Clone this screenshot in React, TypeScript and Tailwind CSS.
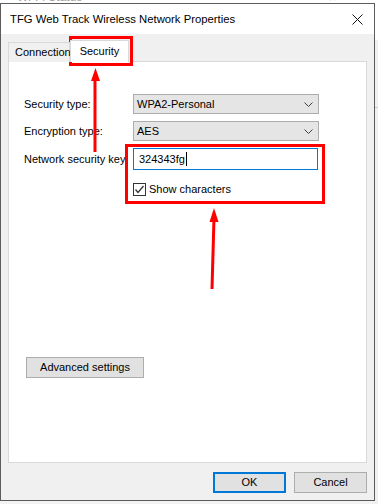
import React from "react";

const font = { fontFamily: '"Liberation Sans", Arial, sans-serif' };

function Chevron() {
  return (
    <svg width="9" height="5" viewBox="0 0 9 5" className="mr-[5px]">
      <polyline points="0.5,0.5 4.5,4.5 8.5,0.5" fill="none" stroke="#404040" strokeWidth="1" />
    </svg>
  );
}

function Combo({ value }: { value: string }) {
  return (
    <div className="flex h-[20px] w-[186px] items-center justify-between border border-[#adadad] bg-[#e5e5e5] pl-[3px] text-[11px] text-black">
      <span className="leading-none">{value}</span>
      <Chevron />
    </div>
  );
}

export default function App() {
  return (
    <div className="relative h-[504px] w-[378px] overflow-hidden bg-[#f3f3f3]" style={font}>
      {/* window behind */}
      <div className="absolute left-0 top-0 h-[40px] w-[378px] bg-white">
        <span className="absolute left-[17px] top-[-9px] text-[12px] leading-[12px] text-[#a0a0a0]">Wi-Fi Status</span>
        <span className="absolute left-[329px] top-[-8px] text-[12px] leading-[12px] text-[#a0a0a0]">×</span>
      </div>
      <div className="absolute right-0 top-[40px] h-[464px] w-[6px] bg-[#f0f0f0]">
        <div className="mt-[67px] h-px w-full bg-[#c8c8c8]" />
      </div>

      {/* dialog */}
      <div className="absolute left-0 top-[3px] flex h-[498px] w-[375px] flex-col border border-[#5c5c5c] bg-[#f0f0f0] text-black">
        <div className="flex h-[30px] items-center justify-between bg-white pl-[9px] pr-[10px]">
          <span className="text-[11.3px]">TFG Web Track Wireless Network Properties</span>
          <svg width="11" height="11" viewBox="0 0 11 11" className="mr-[1px]">
            <path d="M0.5 0.5 L10.5 10.5 M10.5 0.5 L0.5 10.5" stroke="#111" strokeWidth="1" />
          </svg>
        </div>

        <div className="flex flex-1 flex-col pl-[7px] pr-[7px]">
          {/* tabs */}
          <div className="relative z-10 mt-[6px] flex h-[22px] items-end">
            <div className="flex h-[20px] w-[62px] items-center border border-b-0 border-[#d9d9d9] bg-[#f0f0f0] pl-[6px] text-[11px]">
              Connection
            </div>
            <div className="flex h-[22px] w-[59px] items-center justify-center border border-b-0 border-[#d9d9d9] bg-white text-[11px]">
              Security
            </div>
          </div>

          {/* panel */}
          <div className="-mt-px flex h-[402px] flex-col border border-[#d9d9d9] bg-white pl-[15px] text-[11px]">
            <div className="mt-[32px] flex items-center">
              <span className="w-[109px]">Security type:</span>
              <Combo value="WPA2-Personal" />
            </div>
            <div className="mt-[7px] flex items-center">
              <span className="w-[109px]">Encryption type:</span>
              <Combo value="AES" />
            </div>
            <div className="mt-[7px] flex items-center">
              <span className="w-[109px] whitespace-nowrap">Network security key</span>
              <div className="flex h-[22px] w-[185px] items-center border border-[#0078d7] bg-white pl-[5px]">
                <span>324343fg</span>
                <span className="ml-px h-[14px] w-px bg-black" />
              </div>
            </div>
            <div className="ml-[109px] mt-[11px] flex items-center">
              <div className="flex h-[13px] w-[13px] items-center justify-center border border-[#333] bg-white">
                <svg width="11" height="11" viewBox="0 0 11 11">
                  <polyline points="1.5,5.5 4,8.5 9.5,2" fill="none" stroke="#333" strokeWidth="1.3" />
                </svg>
              </div>
              <span className="ml-[3px]">Show characters</span>
            </div>
            <div className="ml-[2px] mt-[159px] flex h-[21px] w-[118px] items-center justify-center border border-[#adadad] bg-[#e1e1e1]">
              Advanced settings
            </div>
          </div>

          {/* buttons */}
          <div className="mt-[9px] flex justify-end gap-[8px] text-[11px]">
            <div className="flex h-[21px] w-[73px] items-center justify-center border-2 border-[#0078d7] bg-[#e1e1e1]">OK</div>
            <div className="flex h-[21px] w-[73px] items-center justify-center border border-[#adadad] bg-[#e1e1e1]">Cancel</div>
          </div>
        </div>
      </div>

      {/* annotations */}
      <div className="absolute left-[69px] top-[36px] h-[30px] w-[64px] border-[3px] border-[#ff0000]" />
      <div className="absolute left-[125px] top-[144px] h-[60px] w-[200px] border-[3px] border-[#ff0000]" />
      <svg className="absolute left-0 top-0" width="378" height="504" viewBox="0 0 378 504">
        <line x1="95" y1="152" x2="95" y2="78" stroke="#ff0000" strokeWidth="3" />
        <polygon points="95.5,68 91,81 100,81" fill="#ff0000" />
        <line x1="212" y1="289" x2="214" y2="218" stroke="#ff0000" strokeWidth="3" />
        <polygon points="214,208 209.5,222 218.5,222" fill="#ff0000" />
      </svg>
    </div>
  );
}
